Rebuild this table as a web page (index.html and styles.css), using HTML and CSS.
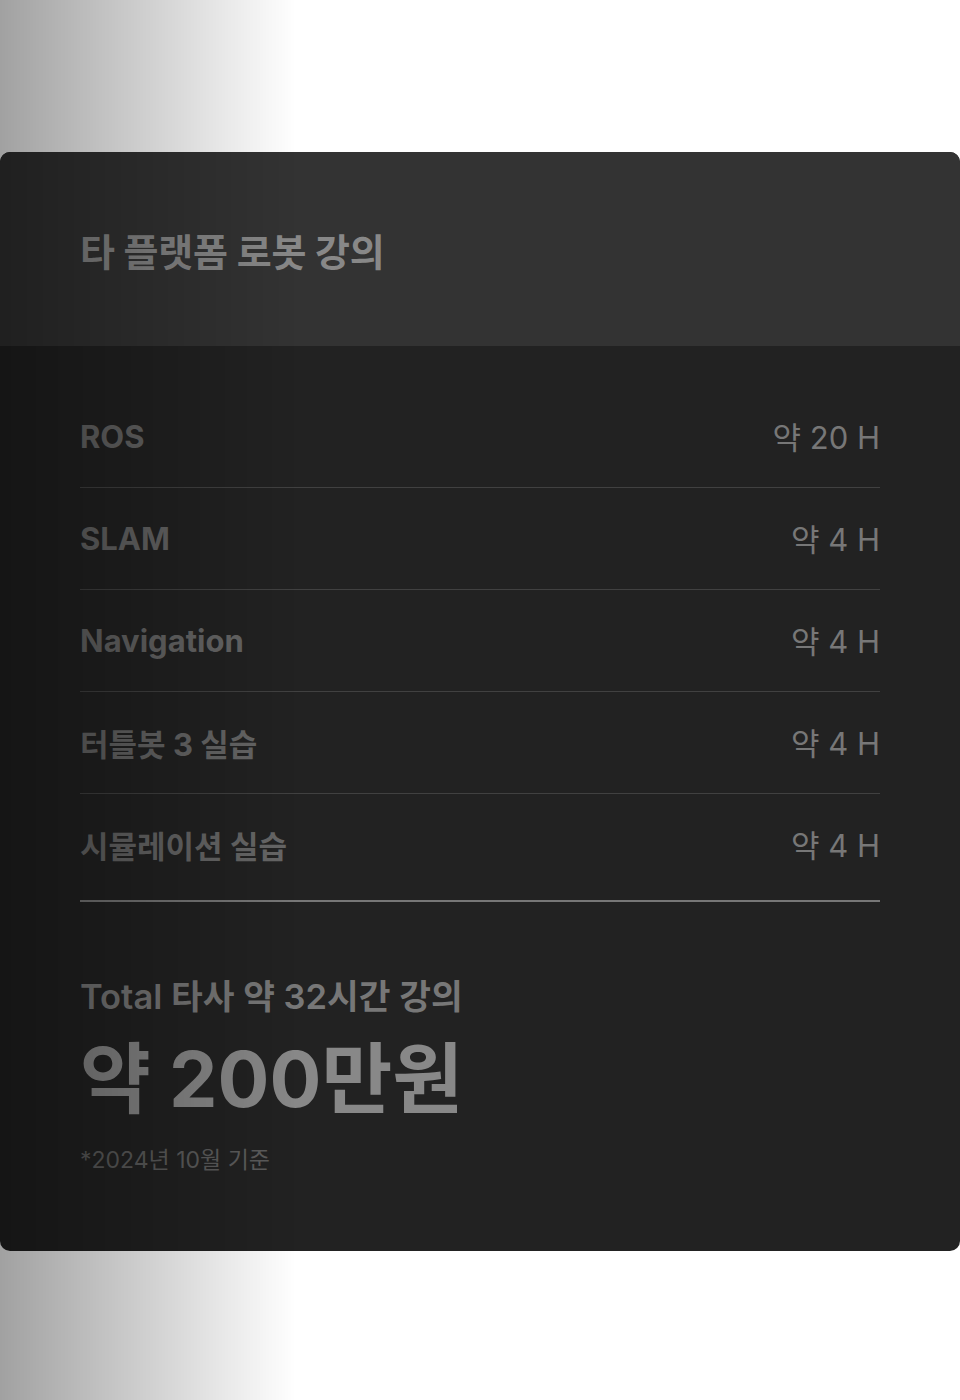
FILE: index.html
```html
<!DOCTYPE html>
<html lang="ko">

<head>
    <meta charset="UTF-8">
    <meta name="viewport" content="width=device-width, initial-scale=1.0">
    <title>타 플랫폼 로봇 강의</title>
    <link rel="stylesheet" href="styles.css">
</head>

<body>
    <div class="page">
        <div class="card">
            <div class="card-head">
                <h2>타 플랫폼 로봇 강의</h2>
            </div>

            <div class="card-body">
                <ul class="course-list">
                    <li class="course-row">
                        <span class="course-name">ROS</span>
                        <span class="course-time">약 20 H</span>
                    </li>
                    <li class="course-row">
                        <span class="course-name">SLAM</span>
                        <span class="course-time">약 4 H</span>
                    </li>
                    <li class="course-row">
                        <span class="course-name">Navigation</span>
                        <span class="course-time">약 4 H</span>
                    </li>
                    <li class="course-row">
                        <span class="course-name">터틀봇 3 실습</span>
                        <span class="course-time">약 4 H</span>
                    </li>
                    <li class="course-row">
                        <span class="course-name">시뮬레이션 실습</span>
                        <span class="course-time">약 4 H</span>
                    </li>
                </ul>

                <div class="total">
                    <p class="total-label">Total 타사 약 32시간 강의</p>
                    <p class="total-price">약 200만원</p>
                    <p class="total-note">*2024년 10월 기준</p>
                </div>
            </div>
        </div>
    </div>

    <!-- 왼쪽 어두운 그라데이션 -->
    <div class="shade"></div>
</body>

</html>
```

FILE: styles.css
```css
body {
    margin: 0;
    background-color: #fff;
    font-family: Inter, "Noto Sans CJK KR", sans-serif;
}

.page {
    padding-top: 152px;
    height: 1400px;
    box-sizing: border-box;
}

.card {
    border-radius: 10px;
    overflow: hidden;
    background-color: #222;
}

.card-head {
    background-color: #333;
    height: 194px;
    display: flex;
    align-items: center;
    padding: 0 80px;
}

.card-head h2 {
    margin: 0;
    font-size: 38px;
    font-weight: 700;
    color: #888;
    letter-spacing: -0.2px;
}

.card-body {
    padding: 40px 80px 74px;
}

.course-list {
    list-style: none;
    margin: 0;
    padding: 0 0 5px;
    border-bottom: 2px solid #777;
}

.course-row {
    height: 101px;
    display: flex;
    align-items: center;
    justify-content: space-between;
    border-bottom: 1px solid #414141;
}

.course-row:last-child {
    border-bottom: none;
}

.course-name {
    font-size: 31px;
    font-weight: 700;
    color: #666;
}

.course-time {
    font-size: 31px;
    font-weight: 400;
    color: #777;
    margin-top: -2px;
}

.total {
    padding-top: 73px;
}

.total p {
    margin: 0;
}

.total-label {
    font-size: 34.5px;
    font-weight: 600;
    line-height: 44px;
    color: #777;
}

.total-price {
    margin-top: 15px !important;
    font-size: 77px;
    font-weight: 700;
    line-height: 91px;
    color: #888;
}

.total-note {
    margin-top: 18px !important;
    font-size: 23px;
    line-height: 34px;
    color: #5c5c5c;
}

.shade {
    position: fixed;
    inset: 0;
    pointer-events: none;
    background: linear-gradient(90deg, rgba(0, 0, 0, 0.37) 0, rgba(0, 0, 0, 0) 296px);
}
```
